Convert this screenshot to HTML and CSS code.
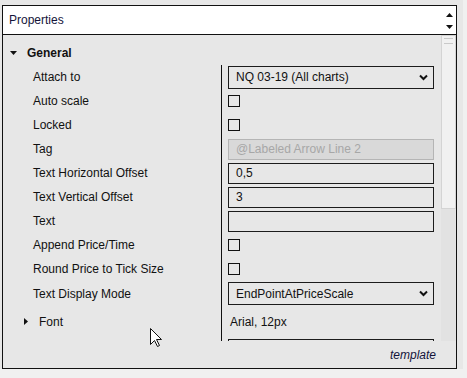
FILE: index.html
```html
<!DOCTYPE html>
<html lang="en">
<head>
    <meta charset="UTF-8">
    <title>Properties</title>
    <link rel="stylesheet" href="styles.css">
</head>
<body>
    <div class="frame">
        <div class="panel">
            <div class="header">
                <span class="title">Properties</span>
                <div class="spin">
                    <svg width="7" height="4" viewBox="0 0 7 4"><path d="M0 4 L3.5 0 L7 4 Z" fill="#111"/></svg>
                    <svg width="7" height="4" viewBox="0 0 7 4"><path d="M0 0 L7 0 L3.5 4 Z" fill="#111"/></svg>
                </div>
            </div>

            <div class="body">
                <div class="grid-area">
                    <div class="group-head">
                        <svg width="7" height="4" viewBox="0 0 7 4"><path d="M0 0 L7 0 L3.5 4 Z" fill="#111"/></svg>
                        <span>General</span>
                    </div>

                    <div class="rows">
                        <div class="row first">
                            <div class="label">Attach to</div>
                            <div class="value">
                                <div class="select">
                                    <span>NQ 03-19 (All charts)</span>
                                    <svg width="9" height="7" viewBox="0 0 9 7"><path d="M1 1.5 L4.5 5 L8 1.5" fill="none" stroke="#111" stroke-width="2"/></svg>
                                </div>
                            </div>
                        </div>
                        <div class="row">
                            <div class="label">Auto scale</div>
                            <div class="value"><span class="check"></span></div>
                        </div>
                        <div class="row">
                            <div class="label">Locked</div>
                            <div class="value"><span class="check"></span></div>
                        </div>
                        <div class="row">
                            <div class="label">Tag</div>
                            <div class="value"><div class="input disabled">@Labeled Arrow Line 2</div></div>
                        </div>
                        <div class="row">
                            <div class="label">Text Horizontal Offset</div>
                            <div class="value"><div class="input">0,5</div></div>
                        </div>
                        <div class="row">
                            <div class="label">Text Vertical Offset</div>
                            <div class="value"><div class="input">3</div></div>
                        </div>
                        <div class="row">
                            <div class="label">Text</div>
                            <div class="value"><div class="input"></div></div>
                        </div>
                        <div class="row">
                            <div class="label">Append Price/Time</div>
                            <div class="value"><span class="check"></span></div>
                        </div>
                        <div class="row">
                            <div class="label">Round Price to Tick Size</div>
                            <div class="value"><span class="check"></span></div>
                        </div>
                        <div class="row row-select">
                            <div class="label">Text Display Mode</div>
                            <div class="value">
                                <div class="select">
                                    <span>EndPointAtPriceScale</span>
                                    <svg width="9" height="7" viewBox="0 0 9 7"><path d="M1 1.5 L4.5 5 L8 1.5" fill="none" stroke="#111" stroke-width="2"/></svg>
                                </div>
                            </div>
                        </div>
                        <div class="row row-font">
                            <div class="label sub">
                                <svg width="4" height="7" viewBox="0 0 4 7"><path d="M0 0 L4 3.5 L0 7 Z" fill="#111"/></svg>
                                <span>Font</span>
                            </div>
                            <div class="value"><span class="plain">Arial, 12px</span></div>
                        </div>
                        <div class="row">
                            <div class="label"></div>
                            <div class="value"><div class="input"></div></div>
                        </div>
                    </div>
                </div>

                <div class="scrollbar">
                    <div class="thumb"><span class="grip"></span></div>
                </div>
            </div>

            <div class="footer">template</div>
        </div>
    </div>

    <svg class="cursor" width="13" height="20" viewBox="0 0 13 20">
        <path d="M0.5 0.5 L0.5 16.5 L4.5 12.5 L7.5 18.5 L9.5 17.5 L6.5 11.5 L11.5 11.5 Z" fill="#fff" stroke="#111" stroke-width="1" stroke-linejoin="miter"/>
    </svg>
</body>
</html>
```

FILE: styles.css
```css
body {
    margin: 0;
    width: 467px;
    height: 378px;
    background-color: #f0f0f0;
    font-family: 'Liberation Sans', Arial, sans-serif;
    font-size: 12px;
    color: #111;
    position: relative;
    overflow: hidden;
}
.frame {
    width: 463px;
    height: 369px;
    box-sizing: border-box;
    padding: 5px 6px 0 2px;
    background-color: #e7e7e7;
}
.panel {
    height: 364px;
    box-sizing: border-box;
    border: 1px solid #111;
    display: flex;
    flex-direction: column;
}
.header {
    height: 29px;
    box-sizing: border-box;
    border-bottom: 1px solid #111;
    background-color: white;
    display: flex;
    align-items: center;
    justify-content: space-between;
    padding-left: 6px;
}
.title {
    color: #14143a;
    margin-top: -1px;
}
.spin {
    width: 7px;
    margin-right: 3px;
    display: flex;
    flex-direction: column;
    gap: 8px;
    margin-top: 1px;
}
.spin svg {
    display: block;
}
.body {
    height: 306px;
    display: flex;
}
.grid-area {
    flex: 1;
    overflow: hidden;
}
.group-head {
    height: 27px;
    box-sizing: border-box;
    padding-top: 9px;
    padding-left: 7px;
    display: flex;
    align-items: center;
    gap: 10px;
    font-weight: bold;
    line-height: 14px;
}
.group-head svg {
    display: block;
}
.row {
    height: 24px;
    display: flex;
}
.row.first {
    height: 27px;
    padding-top: 3px;
    box-sizing: border-box;
}
.row-select {
    height: 25px;
}
.row-font {
    height: 31px;
}
.label {
    width: 219px;
    box-sizing: border-box;
    border-right: 1px solid #111;
    padding-left: 30px;
    display: flex;
    align-items: center;
}
.label.sub {
    padding-left: 21px;
    gap: 11px;
}
.label.sub svg {
    display: block;
}
.value {
    flex: 1;
    padding-left: 6px;
    display: flex;
    align-items: center;
}
.select {
    width: 206px;
    height: 23px;
    box-sizing: border-box;
    border: 1px solid #1c1c1c;
    padding: 0 5px 0 7px;
    display: flex;
    align-items: center;
    justify-content: space-between;
}
.select svg {
    display: block;
}
.input {
    width: 206px;
    height: 21px;
    box-sizing: border-box;
    border: 1px solid #1c1c1c;
    padding-left: 7px;
    line-height: 19px;
}
.input.disabled {
    background-color: #d9d9d9;
    border-color: #b5b5b5;
    color: #a7a7a7;
}
.check {
    width: 12px;
    height: 12px;
    box-sizing: border-box;
    border: 1px solid #111;
}
.plain {
    padding-left: 2px;
}
.scrollbar {
    width: 15px;
    background-color: #e2e2e2;
}
.thumb {
    height: 174px;
    box-sizing: border-box;
    background-color: #f1f1f1;
    border: 1px solid #d4d4d4;
    display: flex;
    justify-content: center;
    padding-top: 2px;
}
.grip {
    width: 9px;
    height: 4px;
    border-top: 1px solid #c9c9c9;
    border-bottom: 1px solid #c9c9c9;
}
.footer {
    flex: 1;
    display: flex;
    align-items: center;
    justify-content: flex-end;
    padding-right: 20px;
    font-style: italic;
    color: #14143a;
}
.cursor {
    position: absolute;
    left: 150px;
    top: 328px;
}
```
